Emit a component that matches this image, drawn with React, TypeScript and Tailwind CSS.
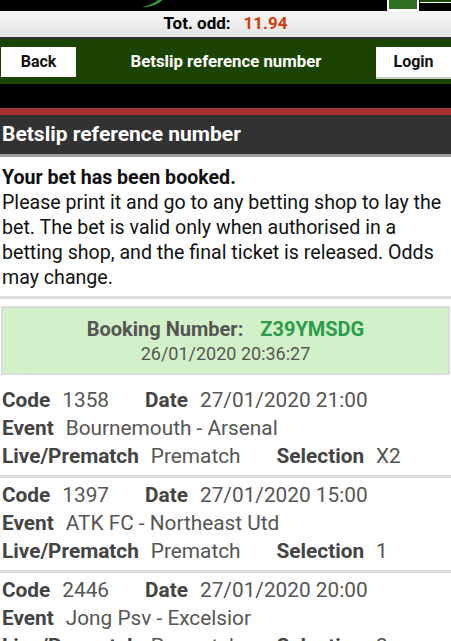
import React from 'react'

type Pick = {
    code: string
    date: string
    event: string
    mode: string
    selection: string
}

const picks: Pick[] = [
    { code: '1358', date: '27/01/2020 21:00', event: 'Bournemouth - Arsenal', mode: 'Prematch', selection: 'X2' },
    { code: '1397', date: '27/01/2020 15:00', event: 'ATK FC - Northeast Utd', mode: 'Prematch', selection: '1' },
    { code: '2446', date: '27/01/2020 20:00', event: 'Jong Psv - Excelsior', mode: 'Prematch', selection: '2' },
]

function Field({ label, value }: { label: string; value: string }) {
    return (
        <span className="mr-[36px]">
            <span className="font-bold text-[#444] mr-[12px]">{label}</span>
            <span className="text-[#555]">{value}</span>
        </span>
    )
}

export default function App() {
    return (
        <div className="w-[451px] h-[641px] overflow-hidden bg-white font-['Roboto',sans-serif]">
            {/* top strip with logo bits */}
            <div className="relative h-[11px] bg-black">
                <svg className="absolute left-[140px] top-0" width="24" height="8" viewBox="0 0 24 8">
                    <path d="M2 7 C8 6 14 3 18 0 L23 0 C18 4 10 8 2 7 Z" fill="#2f9a2c" />
                </svg>
                <div className="absolute left-[387px] top-0 w-[32px] h-[11px] bg-[#2d7020] border-x-2 border-b-2 border-white" />
                <div className="absolute left-[420px] top-0 w-[31px] h-[3px] bg-[#1c4401] border-b border-white" />
            </div>

            {/* total odds */}
            <div className="h-[28px] flex items-center justify-center bg-gradient-to-b from-[#f6f6f6] to-[#e4e4e4] text-[17px] font-bold border-b-2 border-[#333]">
                <span className="text-black mr-[13px]">Tot. odd:</span>
                <span className="text-[#d23c0b]">11.94</span>
            </div>

            {/* nav */}
            <div className="h-[45px] bg-[#1c4401] flex items-center justify-between">
                <button className="ml-[1px] w-[75px] h-[30px] bg-white text-[16px] font-bold text-[#111]">Back</button>
                <span className="text-white font-bold text-[16.8px]">Betslip reference number</span>
                <button className="w-[75px] h-[32px] bg-white text-[16px] font-bold text-[#111] border-b-2 border-[#ccc] mt-[2px]">Login</button>
            </div>

            <div className="h-[24px] bg-black" />
            <div className="h-[7px] bg-[#a83232]" />

            <div className="h-[42px] bg-[#323232] border-b-[3px] border-[#9a9a9a] flex items-center px-[2px]">
                <h1 className="text-white font-bold text-[21px]">Betslip reference number</h1>
            </div>

            <div className="px-[2px] pt-[8px] pb-[6px] text-[19.6px] leading-[25px] text-[#111] border-b-[3px] border-[#dcdcdc]">
                <p className="font-bold">Your bet has been booked.</p>
                <p>
                    Please print it and go to any betting shop to lay the bet. The bet is valid only when authorised in a betting
                    shop, and the final ticket is released. Odds may change.
                </p>
            </div>

            <div className="mt-[7px] mx-[1px] h-[69px] bg-[#d3f1c8] border-2 border-[#dcdcdc] flex flex-col items-center justify-center text-[#555]">
                <div className="text-[20px] font-bold leading-[26px]">
                    Booking Number:<span className="ml-[17px] text-[#2b9c4b]">Z39YMSDG</span>
                </div>
                <div className="text-[18px] leading-[24px]">26/01/2020 20:36:27</div>
            </div>

            <div className="mt-[11px]">
                {picks.map((p) => (
                    <div key={p.code} className="px-[2px] pb-[5px] mb-[3px] border-b-[3px] border-[#dcdcdc] text-[20.8px] leading-[28px] whitespace-nowrap">
                        <div>
                            <Field label="Code" value={p.code} />
                            <Field label="Date" value={p.date} />
                        </div>
                        <div>
                            <Field label="Event" value={p.event} />
                        </div>
                        <div>
                            <Field label="Live/Prematch" value={p.mode} />
                            <Field label="Selection" value={p.selection} />
                        </div>
                    </div>
                ))}
            </div>
        </div>
    )
}
